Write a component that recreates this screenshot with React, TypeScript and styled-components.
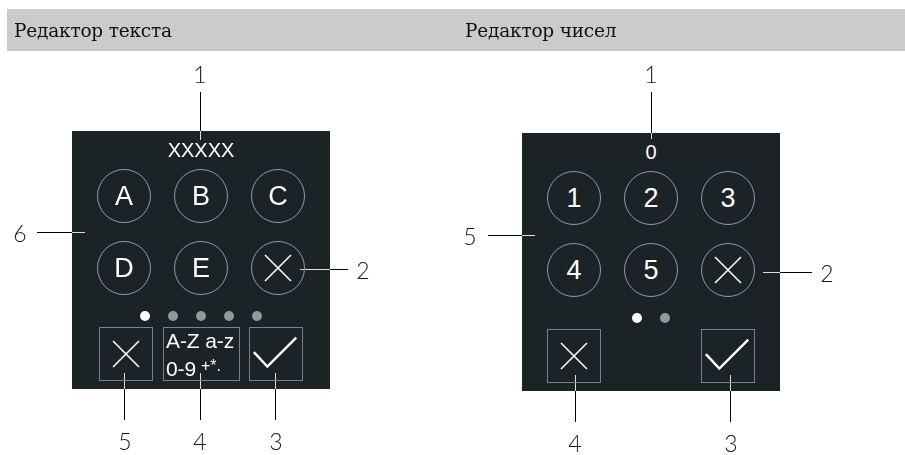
import React from "react";
import styled, { createGlobalStyle } from "styled-components";

const GlobalStyle = createGlobalStyle`
  html, body { margin: 0; padding: 0; background: #fff; }
`;

const Page = styled.div`
  width: 905px;
  height: 455px;
  padding-top: 9px;
  box-sizing: border-box;
  background: #fff;
  isolation: isolate;
  overflow: hidden;
`;

const HeaderBar = styled.div`
  margin-left: 7px;
  height: 42px;
  background: #cbcbcb;
  display: grid;
  grid-template-columns: 451px 1fr;
  align-items: center;
`;

const HeaderCell = styled.div`
  padding-left: 7px;
  padding-top: 1px;
  font-family: "DejaVu Serif", "Liberation Serif", serif;
  font-size: 18.5px;
  color: #111;
  letter-spacing: -0.2px;
`;

const Figures = styled.div`
  display: flex;
`;

const Figure = styled.div<{ $top: number }>`
  width: 450px;
  padding-left: 72px;
  padding-top: ${(p) => p.$top}px;
  box-sizing: border-box;
`;

const Panel = styled.div`
  position: relative;
  width: 258px;
  height: 258px;
  background: #1c2326;
  display: flex;
  flex-direction: column;
  align-items: center;
  padding-top: 9px;
  box-sizing: border-box;
  font-family: "Liberation Sans", Arial, sans-serif;
  color: #fff;
`;

const Display = styled.div`
  height: 20px;
  line-height: 20px;
  font-size: 20px;
`;

const Keys = styled.div`
  margin-top: 9px;
  display: grid;
  grid-template-columns: repeat(3, 54px);
  column-gap: 23px;
  row-gap: 18px;
`;

const Key = styled.div`
  width: 54px;
  height: 54px;
  box-sizing: border-box;
  border: 1.3px solid #8d9ea4;
  border-radius: 50%;
  display: flex;
  align-items: center;
  justify-content: center;
  font-size: 27px;
  line-height: 1;
`;

const Dots = styled.div`
  margin-top: 16px;
  height: 10px;
  display: flex;
  gap: 18px;
`;

const Dot = styled.span<{ $active?: boolean }>`
  width: 10px;
  height: 10px;
  border-radius: 50%;
  background: ${(p) => (p.$active ? "#ffffff" : "#8c9ba1")};
`;

const Actions = styled.div<{ $spread?: boolean }>`
  margin-top: 6px;
  display: flex;
  gap: 9.5px;
  ${(p) => (p.$spread ? "width: 208px; justify-content: space-between;" : "")}
`;

const ActionBox = styled.div<{ $wide?: boolean }>`
  width: ${(p) => (p.$wide ? 77 : 54)}px;
  height: 54px;
  box-sizing: border-box;
  border: 1.5px solid #75848a;
  display: flex;
  align-items: center;
  justify-content: center;
`;

const ModeText = styled.div`
  width: 100%;
  height: 100%;
  padding: 0 0 0 2.5px;
  box-sizing: border-box;
  font-size: 21px;
  line-height: 25px;
  white-space: nowrap;
  letter-spacing: -0.1px;
`;

const Sup = styled.span`
  font-size: 16px;
  margin-left: 5px;
  vertical-align: 5px;
`;

const Leader = styled.span<{ $x: number; $y: number; $w: number; $h: number }>`
  position: absolute;
  left: ${(p) => p.$x}px;
  top: ${(p) => p.$y}px;
  width: ${(p) => p.$w}px;
  height: ${(p) => p.$h}px;
  background: #fff;
  mix-blend-mode: difference;
`;

const Tag = styled.span<{ $x: number; $y: number }>`
  position: absolute;
  left: ${(p) => p.$x}px;
  top: ${(p) => p.$y}px;
  transform: translate(-50%, -50%);
  font-family: Lato, "Open Sans", "DejaVu Sans", sans-serif;
  font-weight: 300;
  font-size: 23px;
  line-height: 1;
  color: #1a1a1a;
`;

const CrossIcon = () => (
  <svg width="28" height="28" viewBox="0 0 28 28">
    <path d="M1 1 L27 27 M27 1 L1 27" stroke="#fff" strokeWidth="1.6" fill="none" />
  </svg>
);

const CheckIcon = () => (
  <svg width="54" height="54" viewBox="0 0 54 54" style={{ display: "block" }}>
    <polyline points="4,25 18,40 48,10" stroke="#fff" strokeWidth="2.6" fill="none" />
  </svg>
);

type Callout = { t: string; x: number; y: number; line: [number, number, number, number] };

const Callouts = ({ items }: { items: Callout[] }) => (
  <>
    {items.map((c) => (
      <React.Fragment key={c.t}>
        <Leader $x={c.line[0]} $y={c.line[1]} $w={c.line[2]} $h={c.line[3]} />
        <Tag $x={c.x} $y={c.y}>{c.t}</Tag>
      </React.Fragment>
    ))}
  </>
);

const textCallouts: Callout[] = [
  { t: "1", x: 128, y: -57, line: [128, -39, 1.2, 48] },
  { t: "6", x: -52, y: 102, line: [-35, 101, 48, 1.2] },
  { t: "2", x: 291, y: 139, line: [228, 138, 48, 1.2] },
  { t: "5", x: 53, y: 310, line: [52, 242, 1.2, 47] },
  { t: "4", x: 128, y: 310, line: [128, 242, 1.2, 47] },
  { t: "3", x: 204, y: 310, line: [203, 242, 1.2, 47] },
];

const numberCallouts: Callout[] = [
  { t: "1", x: 129, y: -59, line: [129, -41, 1.2, 47] },
  { t: "5", x: -52, y: 103, line: [-34, 102, 47, 1.2] },
  { t: "2", x: 305, y: 140, line: [241, 139, 49, 1.2] },
  { t: "4", x: 53, y: 310, line: [53, 242, 1.2, 47] },
  { t: "3", x: 209, y: 310, line: [208, 242, 1.2, 47] },
];

export default function App() {
  return (
    <Page>
      <GlobalStyle />
      <HeaderBar>
        <HeaderCell>Редактор текста</HeaderCell>
        <HeaderCell>Редактор чисел</HeaderCell>
      </HeaderBar>
      <Figures>
        <Figure $top={80}>
          <Panel>
            <Display>XXXXX</Display>
            <Keys>
              {["A", "B", "C", "D", "E"].map((k) => (
                <Key key={k}>{k}</Key>
              ))}
              <Key>
                <CrossIcon />
              </Key>
            </Keys>
            <Dots>
              <Dot $active />
              <Dot />
              <Dot />
              <Dot />
              <Dot />
            </Dots>
            <Actions>
              <ActionBox>
                <CrossIcon />
              </ActionBox>
              <ActionBox $wide>
                <ModeText>
                  A-Z a-z
                  <br />
                  0-9<Sup>+*.</Sup>
                </ModeText>
              </ActionBox>
              <ActionBox>
                <CheckIcon />
              </ActionBox>
            </Actions>
            <Callouts items={textCallouts} />
          </Panel>
        </Figure>
        <Figure $top={82}>
          <Panel>
            <Display>0</Display>
            <Keys>
              {["1", "2", "3", "4", "5"].map((k) => (
                <Key key={k}>{k}</Key>
              ))}
              <Key>
                <CrossIcon />
              </Key>
            </Keys>
            <Dots>
              <Dot $active />
              <Dot />
            </Dots>
            <Actions $spread>
              <ActionBox>
                <CrossIcon />
              </ActionBox>
              <ActionBox>
                <CheckIcon />
              </ActionBox>
            </Actions>
            <Callouts items={numberCallouts} />
          </Panel>
        </Figure>
      </Figures>
    </Page>
  );
}
